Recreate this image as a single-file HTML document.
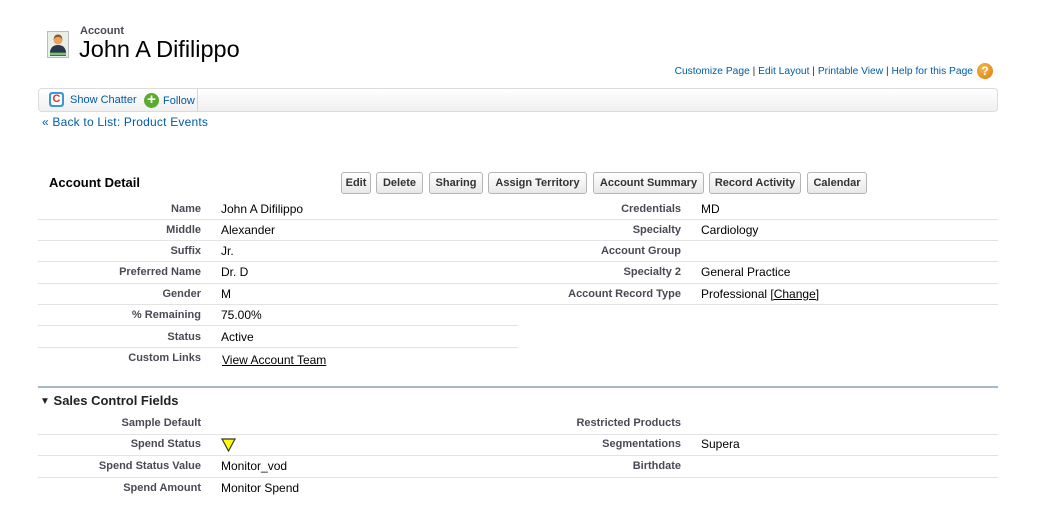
<!DOCTYPE html>
<html><head><meta charset="utf-8"><style>
*{margin:0;padding:0;box-sizing:border-box}
body{width:1047px;height:517px;background:#fff;font-family:"Liberation Sans",Arial,sans-serif;position:relative;overflow:hidden}
.a{position:absolute;white-space:nowrap}
.lbl{position:absolute;font-size:11px;font-weight:bold;color:#4a4a56;text-align:right;white-space:nowrap}
.val{position:absolute;font-size:12px;color:#000;white-space:nowrap}
.sep{position:absolute;height:1px;background:#e3e3e3}
.btn{position:absolute;top:172px;height:22px;border:1px solid #b5b5b5;border-radius:3px;background:linear-gradient(#fff,#e8e8e9);font-size:11px;font-weight:bold;color:#333;text-align:center;line-height:20px}
</style></head><body>
<svg class="a" style="left:47px;top:31px" width="22" height="27" viewBox="0 0 22 27">
<rect x="0.5" y="0.5" width="21" height="26" fill="#e8efe6" stroke="#bbb"/>
<circle cx="11" cy="9" r="4.5" fill="#e9a35c"/>
<path d="M6.5 9 Q7 3 11 3.5 Q15 3 15.5 9 Q14 5.5 11 6 Q8 5.5 6.5 9Z" fill="#8a5a2a"/>
<path d="M3 21 Q4 14 11 14 Q18 14 19 21Z" fill="#2a3550"/>
<rect x="3" y="21" width="16" height="1.5" fill="#2f7a3a"/>
<rect x="3" y="23.5" width="16" height="1.5" fill="#2f7a3a"/>
</svg>
<div class="a" style="left:80px;top:25px;font-size:11px;font-weight:bold;color:#4a4a56">Account</div>
<div class="a" style="left:79px;top:36px;font-size:23.5px;color:#000">John A Difilippo</div>
<div class="a" style="right:74px;top:66px;font-size:10.25px;color:#015ba7;text-align:right">Customize Page <span style="color:#333">|</span> Edit Layout <span style="color:#333">|</span> Printable View <span style="color:#333">|</span> Help for this Page</div>
<div class="a" style="left:977px;top:63px;width:16px;height:16px;border-radius:50%;background:radial-gradient(circle at 40% 35%,#f6b84a,#d77b0c);color:#fff;font-size:12px;font-weight:bold;text-align:center;line-height:16px">?</div>
<div class="a" style="left:38px;top:88px;width:960px;height:24px;border:1px solid #dcdcdc;border-radius:4px;background:linear-gradient(#fff,#f0f0f0)"></div>
<div class="a" style="left:197px;top:89px;width:1px;height:22px;background:#d5d5d5"></div>
<div class="a" style="left:49px;top:92px;width:15px;height:15px;border-radius:3px;background:#3a9ad9"><div style="position:absolute;left:2px;top:2px;width:11px;height:11px;background:#fff;border-radius:2px;color:#e2342a;font-weight:bold;font-size:11px;line-height:11px;text-align:center">C</div></div>
<div class="a" style="left:70px;top:94px;font-size:11px;color:#015ba7">Show Chatter</div>
<div class="a" style="left:144px;top:93px;width:15px;height:15px;border-radius:50%;background:#5aac2c;color:#fff;font-size:15px;font-weight:bold;line-height:14px;text-align:center">+</div>
<div class="a" style="left:163px;top:95px;font-size:11px;color:#015ba7">Follow</div>
<div class="a" style="left:42px;top:115px;font-size:12px;letter-spacing:0.2px;color:#015ba7">« Back to List: Product Events</div>
<div class="a" style="left:49px;top:175px;font-size:13px;font-weight:bold;color:#000">Account Detail</div>
<div class="btn" style="left:341px;width:30px">Edit</div>
<div class="btn" style="left:376px;width:47px">Delete</div>
<div class="btn" style="left:429px;width:54px">Sharing</div>
<div class="btn" style="left:488px;width:99px">Assign Territory</div>
<div class="btn" style="left:593px;width:111px">Account Summary</div>
<div class="btn" style="left:709px;width:92px">Record Activity</div>
<div class="btn" style="left:807px;width:60px">Calendar</div>

<div class="lbl" style="right:846px;top:203px">Name</div><div class="val" style="left:221px;top:202px">John A Difilippo</div>
<div class="lbl" style="right:846px;top:224px">Middle</div><div class="val" style="left:221px;top:223px">Alexander</div>
<div class="lbl" style="right:846px;top:245px">Suffix</div><div class="val" style="left:221px;top:244px">Jr.</div>
<div class="lbl" style="right:846px;top:266px">Preferred Name</div><div class="val" style="left:221px;top:265px">Dr. D</div>
<div class="lbl" style="right:846px;top:288px">Gender</div><div class="val" style="left:221px;top:287px">M</div>
<div class="lbl" style="right:846px;top:309px">% Remaining</div><div class="val" style="left:221px;top:308px">75.00%</div>
<div class="lbl" style="right:846px;top:331px">Status</div><div class="val" style="left:221px;top:330px">Active</div>
<div class="lbl" style="right:846px;top:352px">Custom Links</div><div class="val" style="left:222px;top:353px;text-decoration:underline">View Account Team</div>

<div class="lbl" style="right:366px;top:203px">Credentials</div><div class="val" style="left:701px;top:202px">MD</div>
<div class="lbl" style="right:366px;top:224px">Specialty</div><div class="val" style="left:701px;top:223px">Cardiology</div>
<div class="lbl" style="right:366px;top:245px">Account Group</div>
<div class="lbl" style="right:366px;top:266px">Specialty 2</div><div class="val" style="left:701px;top:265px">General Practice</div>
<div class="lbl" style="right:366px;top:288px">Account Record Type</div><div class="val" style="left:701px;top:287px">Professional <span style="text-decoration:underline">[Change]</span></div>

<div class="sep" style="left:38px;top:219px;width:960px"></div>
<div class="sep" style="left:38px;top:240px;width:960px"></div>
<div class="sep" style="left:38px;top:261px;width:960px"></div>
<div class="sep" style="left:38px;top:283px;width:960px"></div>
<div class="sep" style="left:38px;top:304px;width:960px"></div>
<div class="sep" style="left:38px;top:325px;width:480px"></div>
<div class="sep" style="left:38px;top:347px;width:480px"></div>

<div class="a" style="left:38px;top:386px;width:960px;height:2px;background:#a6b7cf"></div>
<div class="a" style="left:40px;top:393px;font-size:13px;font-weight:bold;color:#222"><span style="font-size:10px;vertical-align:1px">▼</span> Sales Control Fields</div>

<div class="lbl" style="right:846px;top:417px">Sample Default</div>
<div class="lbl" style="right:846px;top:438px">Spend Status</div>
<svg class="a" style="left:221px;top:438px" width="15" height="14"><path d="M1 1 L14 1 L7.5 13Z" fill="#ffff00" stroke="#333" stroke-width="1.2"/></svg>
<div class="lbl" style="right:846px;top:460px">Spend Status Value</div><div class="val" style="left:221px;top:459px">Monitor_vod</div>
<div class="lbl" style="right:846px;top:482px">Spend Amount</div><div class="val" style="left:221px;top:481px">Monitor Spend</div>
<div class="lbl" style="right:366px;top:417px">Restricted Products</div>
<div class="lbl" style="right:366px;top:438px">Segmentations</div><div class="val" style="left:701px;top:437px">Supera</div>
<div class="lbl" style="right:366px;top:460px">Birthdate</div>
<div class="sep" style="left:38px;top:434px;width:960px"></div>
<div class="sep" style="left:38px;top:455px;width:960px"></div>
<div class="sep" style="left:38px;top:477px;width:960px"></div>
</body></html>
